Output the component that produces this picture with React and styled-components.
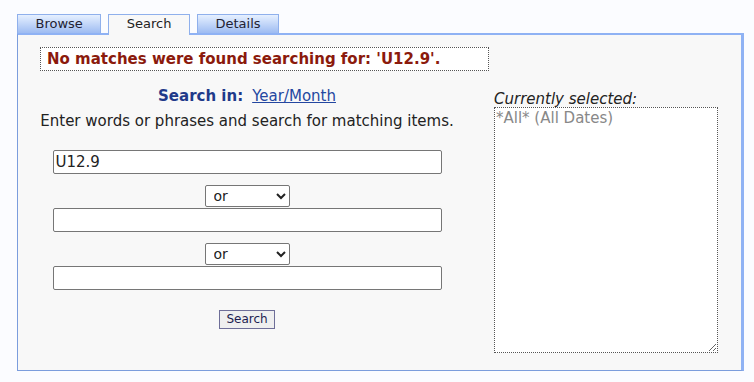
import React from "react";
import styled, { createGlobalStyle } from "styled-components";

const GlobalStyle = createGlobalStyle`
  body {
    margin: 0;
    background: #fbfcff;
    font-family: "DejaVu Sans", Verdana, sans-serif;
    color: #222;
  }
`;

const Page = styled.div`
  padding: 14px 0 0 17px;
`;

const TabBar = styled.div`
  display: flex;
  align-items: flex-start;
  gap: 7px;
  height: 21px;
  margin-bottom: -2px;
  position: relative;
  z-index: 1;
`;

const Tab = styled.div`
  box-sizing: border-box;
  height: ${(p) => (p.$active ? "21px" : "19px")};
  padding: 0 17.5px;
  border: 1px solid #8fb0ec;
  border-bottom: none;
  background: ${(p) =>
    p.$active ? "#f8f8f8" : "linear-gradient(#e6f0ff, #9ebcf2)"};
  color: ${(p) => (p.$active ? "#222" : "#223")};
  font-size: 13px;
  line-height: 18px;
  cursor: pointer;
`;

const Panel = styled.div`
  box-sizing: border-box;
  width: 727px;
  height: 338px;
  background: #f8f8f8;
  border-style: solid;
  border-width: 2px 3px 1px 1px;
  border-color: #8fb2f4 #8fb2f4 #7b9ddd #7b9ddd;
`;

const Message = styled.div`
  box-sizing: border-box;
  width: 449px;
  margin: 12px 0 0 22px;
  padding: 3px 6px;
  border: 1px dotted #555;
  background: #fff;
  color: #8b1a0c;
  font-weight: bold;
  font-size: 15px;
  line-height: 16px;
  white-space: nowrap;
`;

const Columns = styled.div`
  display: flex;
  align-items: flex-start;
  gap: 18px;
  margin-top: 17px;
`;

const FormColumn = styled.div`
  width: 458px;
  display: flex;
  flex-direction: column;
  align-items: center;
`;

const SearchIn = styled.div`
  line-height: 16px;
  font-size: 15px;
`;

const SearchLabel = styled.span`
  font-weight: bold;
  color: #1f3a8a;
  margin-right: 9px;
`;

const Link = styled.a`
  color: #2447a0;
  text-decoration: underline;
`;

const Instructions = styled.div`
  margin-top: 9px;
  font-size: 15px;
  line-height: 16px;
  color: #222;
`;

const TextInput = styled.input`
  box-sizing: border-box;
  width: 389px;
  height: 24px;
  margin-top: ${(p) => p.$gap}px;
  padding: 0 2px;
  border: 1px solid #767676;
  border-radius: 2px;
  background: #fff;
  font-family: "DejaVu Sans", Verdana, sans-serif;
  font-size: 15px;
  color: #222;
`;

const Joiner = styled.select`
  box-sizing: border-box;
  width: 85px;
  height: 22px;
  margin-top: 11px;
  margin-bottom: 1px;
  padding: 0 4px;
  border: 1px solid #767676;
  border-radius: 2px;
  background: #fff;
  font-family: "DejaVu Sans", Verdana, sans-serif;
  font-size: 14px;
  color: #222;
`;

const SearchButton = styled.button`
  box-sizing: border-box;
  height: 19px;
  margin-top: 20px;
  padding: 0 6px;
  border: 1px solid #6e6e98;
  background: #efefef;
  color: #1c1c50;
  font-family: "DejaVu Sans", Verdana, sans-serif;
  font-size: 12px;
  line-height: 17px;
`;

const SelectedColumn = styled.div`
  width: 224px;
  padding-top: 3px;
`;

const SelectedLabel = styled.div`
  font-style: italic;
  font-size: 15px;
  line-height: 16px;
  color: #222;
`;

const SelectedBox = styled.textarea`
  display: block;
  box-sizing: border-box;
  width: 224px;
  height: 246px;
  margin: 0;
  padding: 1px 1px 0;
  border: 1px dotted #555;
  background: #fff;
  font-family: "DejaVu Sans", Verdana, sans-serif;
  font-size: 15px;
  line-height: 18px;
  color: #888;
  outline: none;
`;

export default function App() {
  return (
    <Page>
      <GlobalStyle />
      <TabBar>
        <Tab>Browse</Tab>
        <Tab $active>Search</Tab>
        <Tab>Details</Tab>
      </TabBar>
      <Panel>
        <Message>No matches were found searching for: 'U12.9'.</Message>
        <Columns>
          <FormColumn>
            <SearchIn>
              <SearchLabel>Search in:</SearchLabel>
              <Link href="#">Year/Month</Link>
            </SearchIn>
            <Instructions>
              Enter words or phrases and search for matching items.
            </Instructions>
            <TextInput $gap={21} defaultValue="U12.9" />
            <Joiner defaultValue="or">
              <option value="or">or</option>
              <option value="and">and</option>
              <option value="not">not</option>
            </Joiner>
            <TextInput $gap={0} />
            <Joiner defaultValue="or">
              <option value="or">or</option>
              <option value="and">and</option>
              <option value="not">not</option>
            </Joiner>
            <TextInput $gap={0} />
            <SearchButton>Search</SearchButton>
          </FormColumn>
          <SelectedColumn>
            <SelectedLabel>Currently selected:</SelectedLabel>
            <SelectedBox readOnly defaultValue="*All* (All Dates)" />
          </SelectedColumn>
        </Columns>
      </Panel>
    </Page>
  );
}
